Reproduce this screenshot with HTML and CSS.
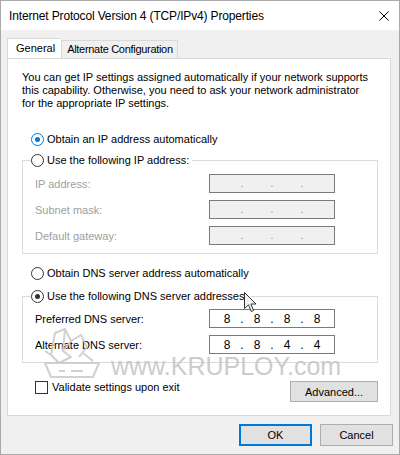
FILE: index.html
```html
<!DOCTYPE html>
<html lang="en">
<head>
  <meta charset="UTF-8" />
  <title>Internet Protocol Version 4 (TCP/IPv4) Properties</title>
  <link rel="stylesheet" href="styles.css">
</head>
<body>
  <div class="window">
    <div class="titlebar">
      <span class="title">Internet Protocol Version 4 (TCP/IPv4) Properties</span>
      <svg class="close" width="10" height="10" viewBox="0 0 10 10">
        <path d="M0.5 0.5 L9.5 9.5 M9.5 0.5 L0.5 9.5" stroke="#000" stroke-width="1" fill="none"/>
      </svg>
    </div>

    <div class="content">
      <div class="tabs">
        <div class="tab active">General</div>
        <div class="tab">Alternate Configuration</div>
      </div>

      <div class="panel">
        <p class="intro">You can get IP settings assigned automatically if your network supports<br>this capability. Otherwise, you need to ask your network administrator<br>for the appropriate IP settings.</p>

        <label class="radio-row first"><span class="radio checked focus"></span>Obtain an IP address automatically</label>

        <fieldset class="group ip-group">
          <legend><span class="radio"></span>Use the following IP address:</legend>
          <div class="field-row">
            <span class="field-label disabled">IP address:</span>
            <div class="ip-box disabled"><span></span><i>.</i><span></span><i>.</i><span></span><i>.</i><span></span></div>
          </div>
          <div class="field-row">
            <span class="field-label disabled">Subnet mask:</span>
            <div class="ip-box disabled"><span></span><i>.</i><span></span><i>.</i><span></span><i>.</i><span></span></div>
          </div>
          <div class="field-row">
            <span class="field-label disabled">Default gateway:</span>
            <div class="ip-box disabled"><span></span><i>.</i><span></span><i>.</i><span></span><i>.</i><span></span></div>
          </div>
        </fieldset>

        <label class="radio-row dns-auto"><span class="radio"></span>Obtain DNS server address automatically</label>

        <fieldset class="group dns-group">
          <legend><span class="radio checked"></span>Use the following DNS server addresses:</legend>
          <div class="field-row">
            <span class="field-label">Preferred DNS server:</span>
            <div class="ip-box"><span>8</span><i>.</i><span>8</span><i>.</i><span>8</span><i>.</i><span>8</span></div>
          </div>
          <div class="field-row">
            <span class="field-label">Alternate DNS server:</span>
            <div class="ip-box"><span>8</span><i>.</i><span>8</span><i>.</i><span>4</span><i>.</i><span>4</span></div>
          </div>
        </fieldset>

        <div class="footer-row">
          <label class="check-row"><span class="checkbox"></span>Validate settings upon exit</label>
          <button class="btn advanced">Advanced...</button>
        </div>

        <!-- watermark sits over the DNS group -->
        <div class="watermark">
          <svg width="62" height="52" viewBox="0 0 62 52">
            <g fill="none" stroke="#c9c9c9" stroke-width="2" stroke-linejoin="round">
              <path d="M14 6 L24 2 L30 14 L22 24 L30 30 L18 36 L10 28 Z"/>
              <path d="M24 2 L22 24 M30 14 L40 8 L46 20 L38 30"/>
              <path d="M4 24 L10 28 M42 26 L52 34"/>
              <path d="M4 36 L58 36 L52 50 L10 50 Z"/>
            </g>
            <path d="M18 44 h6 M30 44 h12" stroke="#c9c9c9" stroke-width="2"/>
          </svg>
          <span>www.KRUPLOY.com</span>
        </div>
      </div>

      <div class="buttons">
        <button class="btn default">OK</button>
        <button class="btn">Cancel</button>
      </div>
    </div>

    <svg class="cursor" width="14" height="22" viewBox="0 0 14 22">
      <path d="M0.5 0.5 L0.5 16.5 L4.5 12.8 L7.3 19.5 L9.6 18.5 L6.9 12 L12 12 Z" fill="#f4f4f4" stroke="#333" stroke-width="1" stroke-linejoin="round"/>
    </svg>
  </div>
</body>
</html>
```

FILE: styles.css
```css
body {
  margin: 0;
  background: #f0f0f0;
  font-family: 'Liberation Sans', Arial, sans-serif;
  font-size: 11px;
  color: #000;
}

.window {
  position: relative;
  width: 400px;
  height: 455px;
  box-sizing: border-box;
  border: 1px solid #a9a9a9;
  background: #f0f0f0;
  overflow: hidden;
}

.titlebar {
  height: 29px;
  background: #fff;
  display: flex;
  align-items: center;
  justify-content: space-between;
  padding: 0 10px 0 8px;
}

.title {
  font-size: 12px;
  letter-spacing: -0.15px;
}

.close {
  display: block;
}

.content {
  padding: 0 6px;
}

/* tabs */
.tabs {
  display: flex;
  align-items: flex-end;
  height: 28px;
}

.tab {
  height: 17px;
  line-height: 17px;
  padding: 0 4px 0 5px;
  border: 1px solid #d9d9d9;
  border-bottom: none;
  background: #f0f0f0;
  letter-spacing: -0.3px;
}

.tab.active {
  height: 20px;
  line-height: 19px;
  padding: 0 6px 0 8px;
  background: #fff;
  border-right: none;
  margin-bottom: -1px;
  position: relative;
  letter-spacing: 0;
}

.tab + .tab {
  border-left: 1px solid #d9d9d9;
}

.panel {
  position: relative;
  margin-right: 2px;
  background: #fff;
  border: 1px solid #d9d9d9;
  padding: 12px 12px 13px 14px;
}

.intro {
  margin: 0;
  line-height: 13px;
}

/* radios and checkbox */
.radio-row,
.check-row,
legend {
  display: flex;
  align-items: center;
  height: 14px;
  line-height: 14px;
}

.radio-row {
  padding-left: 9px;
}

.radio-row.first {
  margin-top: 22px;
}

.radio-row.dns-auto {
  margin-top: 12px;
}

.radio {
  width: 11px;
  height: 11px;
  border: 1px solid #333;
  border-radius: 50%;
  margin-right: 3px;
  position: relative;
  flex-shrink: 0;
  background: #fff;
}

.radio.checked::after {
  content: "";
  position: absolute;
  left: 3px;
  top: 3px;
  width: 5px;
  height: 5px;
  border-radius: 50%;
  background: #333;
}

.radio.focus {
  border-color: #0078d7;
}

.radio.focus::after {
  background: #0078d7;
}

.checkbox {
  width: 11px;
  height: 11px;
  border: 1px solid #333;
  margin-right: 4px;
  flex-shrink: 0;
}

/* group boxes */
.group {
  margin: 7px 0 0;
  padding: 7px 0 8px 12px;
  border: 1px solid #dcdcdc;
  display: flex;
  flex-direction: column;
  gap: 7px;
}

.group legend {
  padding: 0 3px 0 0;
  margin-left: -4px;
}

.dns-group {
  margin-top: 9px;
  padding-top: 6px;
}

.field-row {
  display: grid;
  grid-template-columns: 174px 126px;
  align-items: center;
  height: 19px;
}

.field-label.disabled {
  color: #a0a0a0;
}

.ip-box {
  box-sizing: border-box;
  height: 19px;
  border: 1px solid #7a7a7a;
  background: #fff;
  display: flex;
  align-items: center;
  padding-left: 6px;
  font-size: 12px;
}

.ip-box.disabled {
  background: #f0f0f0;
}

.ip-box span {
  width: 22px;
  text-align: center;
}

.ip-box i {
  width: 8px;
  text-align: center;
  font-style: normal;
}

.ip-box.disabled i {
  color: #8a8a7a;
  font-size: 10px;
}

.footer-row {
  margin-top: 18px;
  display: flex;
  justify-content: space-between;
  align-items: flex-start;
  padding-left: 13px;
}

.check-row {
  margin-top: -1px;
}

/* buttons */
.btn {
  font-family: inherit;
  font-size: 11px;
  color: #000;
  background: #e1e1e1;
  border: 1px solid #adadad;
  padding: 0;
  height: 21px;
}

.btn.advanced {
  width: 88px;
}

.buttons {
  display: flex;
  justify-content: flex-end;
  gap: 8px;
  margin-top: 8px;
}

.buttons .btn {
  width: 73px;
  height: 22px;
}

.btn.default {
  border: 2px solid #0078d7;
}

/* overlays */
.watermark {
  position: absolute;
  left: 33px;
  top: 268px;
  display: flex;
  align-items: flex-end;
  gap: 8px;
  pointer-events: none;
  opacity: 0.85;
}

.watermark span {
  font-size: 25px;
  color: #c4c4c4;
  line-height: 22px;
  margin-bottom: 2px;
}

.cursor {
  position: absolute;
  left: 243px;
  top: 291px;
}
```
